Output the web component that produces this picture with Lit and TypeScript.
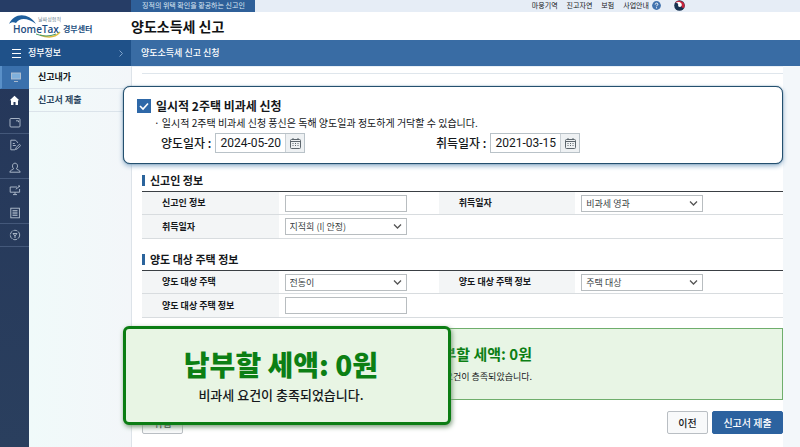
import { LitElement, html, css, svg } from "lit";
import { customElement } from "lit/decorators.js";

const RAIL = [
  { name: "화면", on: true, art: svg`<rect x="1.5" y="2" width="9" height="6" fill="#7fb0dc"/><path d="M4 10.5h4"/>` },
  { name: "홈", home: true, art: svg`<path d="M6 .8 0.8 5.8H2.2V11H4.9V7.6H7.1V11H9.8V5.8H11.2Z" fill="#fff" stroke="none"/>` },
  { name: "창", art: svg`<rect x="1" y="1.5" width="10" height="8.5" rx="1"/><path d="M7 3.8h2.5v1.4"/>`, line: true },
  { name: "문서 작성", art: svg`<path d="M8.5 4V3.2L6.5 1.2H1.8V10.8H6M3.8 4.5h2M3.8 6.5h3M6.5 10.5l.6-2 3.4-3.2 1.2 1.2-3.3 3.3z"/>` },
  { name: "사용자", art: svg`<path d="M4.6 6.8C2.6 4.6 3.4 1.2 6 1.2s3.4 3.4 1.4 5.6c.2 1 3.6 1 3.8 3.4H.8C1 7.8 4.4 7.8 4.6 6.8Z"/>`, line: true },
  { name: "모니터", art: svg`<path d="M8 3H1.2v5.2h9.4V5M6 8.2v2.2M4 10.6h4M6.8 5.2 11 2M9 2h2"/>` },
  { name: "목록", art: svg`<rect x="1.8" y="1.2" width="8.6" height="9.6"/><path d="M3.5 3.6h5M3.5 5.2h5M3.5 6.8h5M3.5 8.4h5"/>`, line: true },
  { name: "도움말", art: svg`<circle cx="6" cy="6" r="4.7" stroke-dasharray="4 1"/><path d="M4 4.5h4L6 7V9M6 7 4 4.5"/>`, line: true },
];

const calendar = svg`<svg width="11" height="11" viewBox="0 0 11 11" fill="none" stroke="#5d666d" aria-hidden="true">
  <rect x="0.5" y="1.5" width="10" height="9" rx="1"/><path d="M.5 3.5h10M3 0v2M8 0v2"/>
  <path d="M2.5 5.5h6M2.5 7.5h6" stroke-dasharray="1 1.5"/></svg>`;

@customElement("app-root")
export class AppRoot extends LitElement {
  static styles = css`
    * { box-sizing: border-box; }
    :host {
      display: flex; flex-direction: column; min-height: 100vh; overflow: hidden;
      background: #f3f7fa; color: #15181b;
      font: 9px/12px "Noto Sans CJK KR", sans-serif;
    }
    h1, h2, p, ul { margin: 0; padding: 0; list-style: none; }
    a { color: inherit; text-decoration: none; }
    button, input, select { font: inherit; color: inherit; margin: 0; border-radius: 0; }
    button { padding: 0; }

    .top { display: flex; height: 12px; background: #e6edf6; font-size: 7px; line-height: 10px; }
    .top-dark { width: 131px; background: #263d66; }
    .top-note { width: 124px; padding-left: 11px; background: #2f6099; color: #dbe7f3; white-space: nowrap; }
    .top-links { display: flex; gap: 9px; margin-left: auto; margin-right: 115px; align-items: center; height: 10px; white-space: nowrap; }
    .help { display: flex; align-items: center; gap: 3px; }
    .emblem { display: block; margin-left: 4px; }

    .head { display: flex; align-items: center; height: 28px; background: #fff; }
    .brand { display: flex; align-items: center; width: 131px; padding-left: 8px; gap: 2px; }
    .brand svg { display: block; }
    .brand-name { font: 600 10px "Open Sans", sans-serif; }
    .brand-tag { font-size: 5px; }
    .brand-sub { font-size: 8px; font-weight: 700; color: #24507f; padding-top: 6px; }
    h1 { font-size: 14px; line-height: 20px; font-weight: 700; color: #101214; }

    .bar { display: flex; height: 26px; color: #fff; line-height: 26px; font-weight: 500; }
    .bar-menu { display: flex; align-items: center; width: 131px; padding: 0 8px 0 12px; gap: 7px; background: #1f5189; border: 0; }
    .bar-menu svg:last-child { margin-left: auto; }
    .bar-title { flex: 1; padding-left: 10px; background: #396ca4; }

    .body { display: flex; flex: 1; }
    .rail { width: 29px; background: linear-gradient(#25375a, #2a3f5e); }
    .rail li { display: flex; height: 22px; border-bottom: 1px solid transparent; }
    .rail li:nth-child(2n) { height: 23px; }
    .rail .on { height: 23px; background: #3a70ac; border-left: 2px solid #5a90c8; }
    .rail .line { border-color: #44587a; }
    .rail a { display: flex; flex: 1; align-items: center; justify-content: center; }
    .side { width: 103px; background: linear-gradient(90deg, #f0fafa, #f3f6f9); border-right: 1px solid #dde3e9; }
    .side li { height: 23px; padding-left: 9px; line-height: 21px; border-bottom: 1px solid #dbe3ea; font-weight: 700; }
    .side li + li { color: #2b4560; }

    .main { flex: 1; min-width: 0; margin-right: 17px; padding-left: 10px; background: #fff; border-top: 1px solid #e8eff6; }
    .rule { height: 7px; border-bottom: 1px solid #dfe6ec; }

    .claim {
      position: relative; margin: 12px 0 0 -19px; height: 78px; padding: 10px 13px;
      background: #fff; border: 1px solid #24506f; border-radius: 7px; box-shadow: 0 0 1px #24506f, 0 2px 5px #8fb0cc;
    }
    .claim-head { display: flex; align-items: center; gap: 5px; height: 18px; font-size: 12px; line-height: 18px; font-weight: 700; }
    .tick { appearance: none; width: 14px; height: 14px; background: #2e68a8; }
    .tick-box { display: grid; }
    .tick-box > * { grid-area: 1 / 1; }
    .claim p { padding-left: 17px; height: 18px; line-height: 16px; font-size: 10px; white-space: nowrap; }
    .dates { display: flex; padding-left: 24px; height: 20px; font-size: 12px; line-height: 20px; }
    .date { display: flex; gap: 4px; flex: 0 0 275px; white-space: nowrap; font-weight: 500; }
    .date-field { display: flex; width: 90px; border: 1px solid #b9c2c8; background: #fff; }
    .date-field input { width: 69px; padding: 0 0 0 4px; border: 0; font: 12px/18px Roboto, sans-serif; background: none; }
    .date-field button { display: grid; place-items: center; flex: 1; border: 0; border-left: 1px solid #c9d0d5; background: #eef1f3; }

    .section { padding-top: 9px; }
    .section + .section { padding-top: 13px; }
    h2 { display: flex; align-items: center; gap: 5px; height: 15px; font-size: 11px; line-height: 15px; font-weight: 700; }
    h2::before { content: ""; width: 3px; height: 11px; background: #2b649c; }
    table { width: 100%; margin-top: 3px; border-collapse: collapse; table-layout: fixed; border-top: 1px solid #3a3f44; }
    .col-label { width: 21.3%; }
    .col-field { width: 25%; }
    td, th { height: 23px; padding: 0; border-bottom: 1px solid #d8dcdf; text-align: left; }
    tr:last-child > * { height: 24px; }
    th { padding-left: 20px; background: #f3f5f6; font-weight: 700; }
    td { padding-left: 6px; }
    .field { position: relative; display: block; width: 122px; height: 17px; }
    .field input, .field select { display: block; appearance: none; width: 100%; height: 17px; padding: 0 4px; background: #fff; border: 1px solid #b8bdc0; color: #3a3f44; line-height: 15px; }
    .field svg { position: absolute; right: 5px; top: 5px; pointer-events: none; }

    .outcome { position: relative; margin-top: 10px; }
    .result { display: flex; flex-direction: column; align-items: flex-end; justify-content: center; height: 72px; padding: 4px 39% 0 0; background: #e8f5e5; border: 1px solid #6fae6c; }
    .result strong { font-size: 15px; line-height: 22px; color: #0c7f14; }
    .result span { line-height: 24px; }
    .callout {
      position: absolute; left: -19px; top: -2px; width: 328px; height: 99px; padding-right: 12px; gap: 2px;
      display: flex; flex-direction: column; align-items: center; justify-content: center;
      background: #e8f5e4; border: 3px solid #0b7d13; border-radius: 6px; box-shadow: 1px 2px 5px #7a9a7a;
    }
    .callout strong { font-size: 28px; line-height: 36px; font-weight: 900; color: #0c7f14; }
    .callout span { font-size: 13px; line-height: 22px; font-weight: 500; }
    .actions { display: flex; gap: 4px; margin-top: 11px; }
    .actions button { height: 23px; width: 41px; border: 1px solid #b9bec3; border-radius: 2px; background: #f8f9fa; font-size: 10px; line-height: 20px; font-weight: 500; }
    .actions .back { margin-left: auto; }
    .actions .send { width: 71px; background: #2c629f; border-color: #2c629f; color: #fff; }
  `;

  private pick(id: string, value: string) {
    return html`<span class="field"><select id=${id}><option>${value}</option></select>
      <svg width="9" height="7" viewBox="0 0 9 7" fill="none" stroke="#555" stroke-width="1.3"><path d="M1 1.5 4.5 5 8 1.5"/></svg></span>`;
  }

  private text(id: string) {
    return html`<span class="field"><input id=${id} type="text"></span>`;
  }

  private date(id: string, label: string, value: string) {
    return html`<div class="date"><label for=${id}>${label} :</label>
      <span class="date-field"><input id=${id} type="text" .value=${value}><button type="button" aria-label="${label} 달력">${calendar}</button></span></div>`;
  }

  render() {
    const columns = html`<colgroup><col class="col-label"><col class="col-field"><col class="col-label"><col></colgroup>`;
    return html`
      <div class="top">
        <div class="top-dark"></div>
        <div class="top-note">징적의 위택 확인을 황공하는 신고인</div>
        <nav class="top-links">
          <a href="#">마웅기역</a><a href="#">진고자연</a><a href="#">보험</a>
          <a href="#" class="help">사업안내
            <svg width="9" height="9" viewBox="0 0 9 9"><circle cx="4.5" cy="4.5" r="4.4" fill="#4474ae"/><path d="M3.2 3.5c0-1.8 2.7-1.8 2.7-.2 0 1-1.4 1-1.4 2M4.5 6.3v1" fill="none" stroke="#fff"/></svg></a>
          <svg class="emblem" width="11" height="11" viewBox="0 0 11 11"><circle cx="5.5" cy="5.5" r="5.3" fill="#173250"/><path d="M1 3A5.3 5.3 0 0 1 10.5 7C9.5 9 7.2 7.5 7.6 5.8 8 3.5 5.5 2 1 3Z" fill="#c9253c"/><path d="M1.8 2.8C5 .8 9 3 7.5 6 6.4 8 3.5 7 4.2 4.8 4.4 3.6 3 2.8 1.8 2.8Z" fill="#fff"/></svg>
        </nav>
      </div>
      <header class="head">
        <div class="brand">
          <svg width="53" height="26" viewBox="0 0 53 26" role="img" aria-label="HomeTax">
            <path d="M1 11C6 0 20-1 28 11 20 5 12 4 8 10 6 9 3 9 1 11Z" fill="#1f5f9d"/>
            <path d="M32 22Q45 27 52 19" fill="none" stroke="#e0bd3f" stroke-width="1.5"/>
            <path d="M28 21Q38 25 48 21" fill="none" stroke="#4b9a6a"/>
            <text class="brand-tag" x="30" y="8" fill="#6c7f90">날짜성험적</text>
            <text class="brand-name" x="5" y="20" fill="#1d4c80">HomeTax</text>
          </svg>
          <span class="brand-sub">경부센터</span>
        </div>
        <h1>양도소득세 신고</h1>
      </header>
      <div class="bar">
        <button class="bar-menu" type="button">
          <svg width="9" height="9" viewBox="0 0 9 9" stroke="#fff"><path d="M0 .5h9M0 4.5h9M0 8.5h9"/></svg>
          정부정보
          <svg width="4" height="7" viewBox="0 0 4 7" fill="none" stroke="#7fa3cb"><path d="M.5.5 3.5 3.5.5 6.5"/></svg>
        </button>
        <div class="bar-title">양도소득세 신고 신청</div>
      </div>
      <div class="body">
        <ul class="rail">
          ${RAIL.map((r) => html`<li class="${r.on ? "on" : ""} ${r.line ? "line" : ""}"><a href="#" aria-label=${r.name}>
            <svg width=${r.home ? 11 : 12} height=${r.home ? 11 : 12} viewBox="0 0 12 12" fill="none" stroke="#b4c1d0" stroke-width="0.9">${r.art}</svg></a></li>`)}
        </ul>
        <ul class="side"><li><a href="#">신고내가</a></li><li><a href="#">신고서 제출</a></li></ul>
        <main class="main">
          <div class="rule"></div>
          <section class="claim">
            <label class="claim-head"><span class="tick-box"><input class="tick" type="checkbox" checked>
              <svg width="14" height="14" viewBox="0 0 14 14" fill="none" stroke="#fff" stroke-width="1.6"><path d="M3 7 6 10 11 4.5"/></svg></span>일시적 2주택 비과세 신청</label>
            <p>· 일시적 2주택 비과세 신청 풍신은 독해 양도일과 정도하게 거닥할 수 있습니다.</p>
            <div class="dates">${this.date("sold", "양도일자", "2024-05-20")}${this.date("bought", "취득일자", "2021-03-15")}</div>
          </section>
          <section class="section">
            <h2>신고인 정보</h2>
            <table>
              ${columns}
              <tr><th><label for="a">신고인 정보</label></th><td>${this.text("a")}</td><th><label for="b">취득일자</label></th><td>${this.pick("b", "비과세 영과")}</td></tr>
              <tr><th><label for="c">취득일자</label></th><td colspan="3">${this.pick("c", "지적희 (I| 안정)")}</td></tr>
            </table>
          </section>
          <section class="section">
            <h2>양도 대상 주택 정보</h2>
            <table>
              ${columns}
              <tr><th><label for="d">양도 대상 주택</label></th><td>${this.pick("d", "전동이")}</td><th><label for="e">양도 대상 주택 정보</label></th><td>${this.pick("e", "주택 대상")}</td></tr>
              <tr><th><label for="f">양도 대상 주택 정보</label></th><td colspan="3">${this.text("f")}</td></tr>
            </table>
          </section>
          <div class="outcome">
            <div class="result"><strong>납부할 세액: 0원</strong><span>비과세 요건이 층족되았습니다.</span></div>
            <div class="actions">
              <button type="button">취업</button><button type="button" class="back">이전</button><button type="button" class="send">신고서 제출</button>
            </div>
            <div class="callout"><strong>납부할 세액: 0원</strong><span>비과세 요건이 충족되었습니다.</span></div>
          </div>
        </main>
      </div>`;
  }
}
